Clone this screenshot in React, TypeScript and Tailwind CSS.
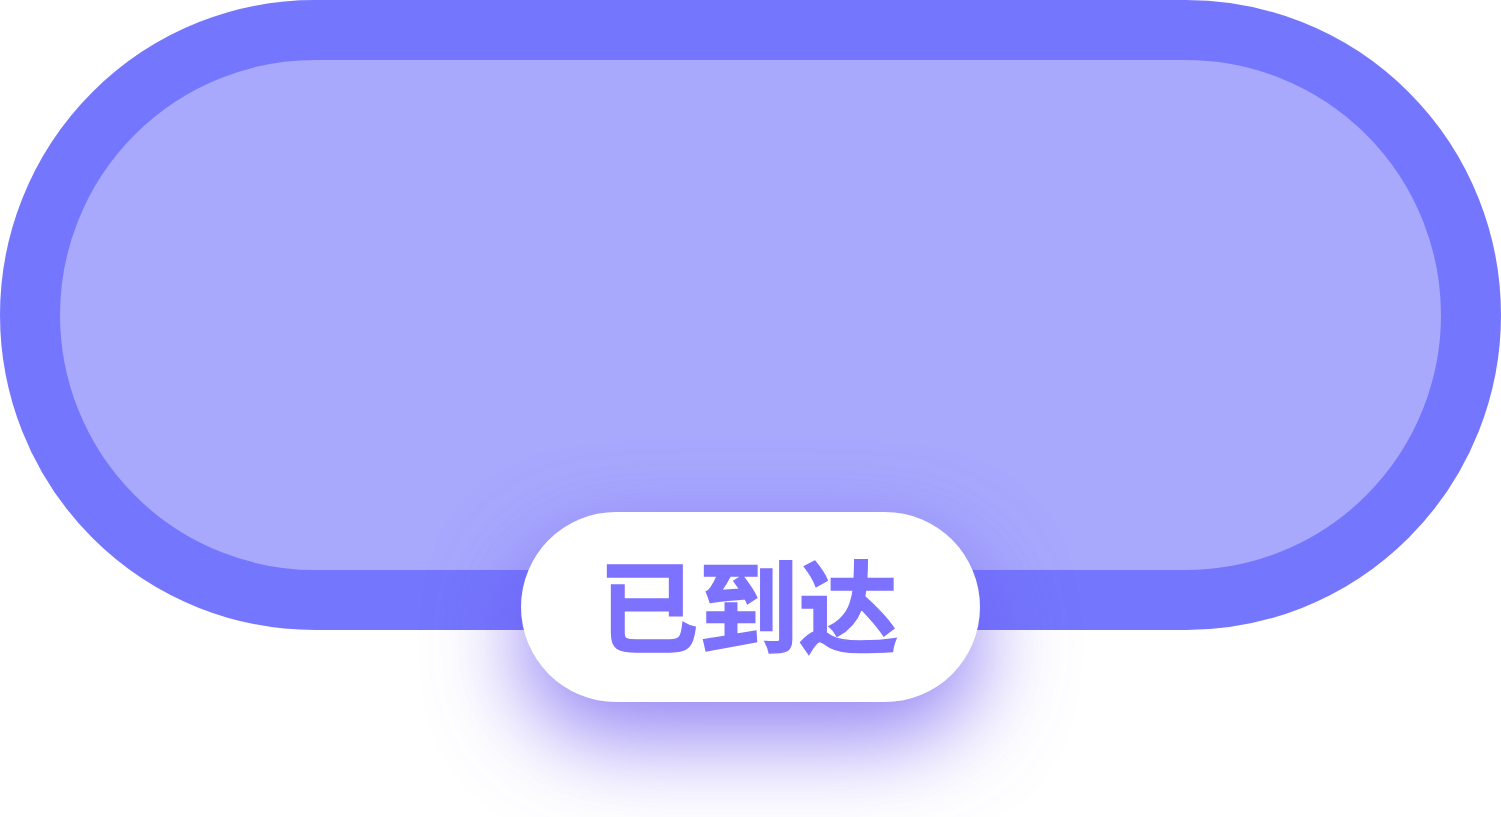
export default function App() {
  return (
    <div className="w-[1501px] h-[817px] bg-white overflow-hidden">
      <div className="relative w-[1501px] h-[630px]">
        {/* Pill */}
        <div className="w-full h-full rounded-full border-[60px] border-[#7476fd] bg-[#a8a8fd]" />

        {/* Status badge */}
        <div className="absolute left-[521px] top-[512px] w-[459px] h-[190px] rounded-full bg-white flex items-center justify-center shadow-[0_36px_90px_rgba(108,86,240,0.75)]">
          <span className="text-[100px] leading-none font-bold text-[#7d72ff] font-['Noto_Sans_CJK_SC',sans-serif] -translate-y-[5px] -translate-x-[2px] [-webkit-text-stroke:1.5px_#7d72ff]">
            已到达
          </span>
        </div>
      </div>
    </div>
  );
}
